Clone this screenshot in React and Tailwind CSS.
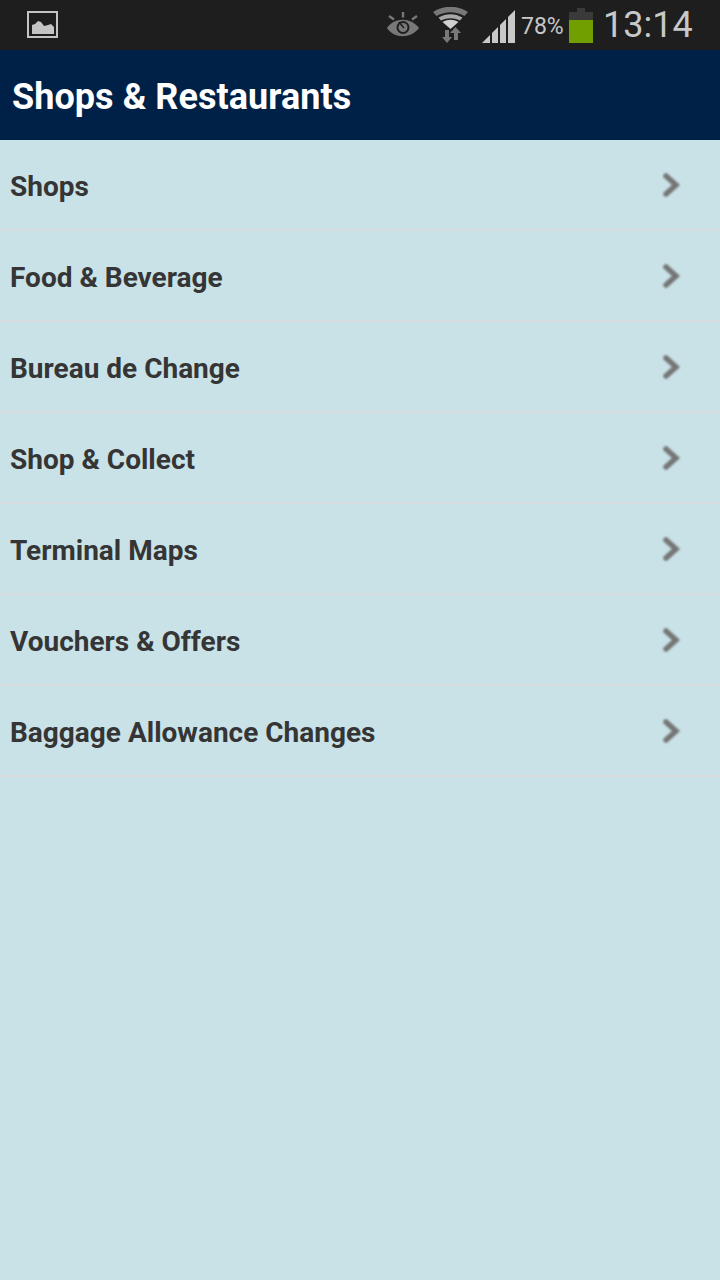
const items = [
  'Shops',
  'Food & Beverage',
  'Bureau de Change',
  'Shop & Collect',
  'Terminal Maps',
  'Vouchers & Offers',
  'Baggage Allowance Changes',
];

function ImageIcon() {
  return (
    <svg width="31" height="27" viewBox="0 0 31 27" className="block">
      <rect x="1" y="1" width="29" height="25" fill="none" stroke="#c4c4c4" strokeWidth="2" />
      <path d="M5 23V14L8 13L11 10L14 11L17 15L21 14L24 13L27 16V23Z" fill="#c4c4c4" />
    </svg>
  );
}

function EyeIcon() {
  return (
    <svg width="32" height="25" viewBox="0 0 32 25" className="block">
      <path d="M0 16C7 5 24 5 32 16C24 27 7 27 0 16Z" fill="#787878" />
      <circle cx="16" cy="15.500" r="6.500" fill="#1e1e1e" />
      <circle cx="16" cy="15.500" r="4.500" fill="#787878" />
      <path d="M12 10L17 16" stroke="#1e1e1e" strokeWidth="1.500" />
      <path d="M2 4L7 7.500M16 0V5.500M30 4L25 7.500" stroke="#787878" strokeWidth="2.400" />
    </svg>
  );
}

function WifiIcon() {
  return (
    <svg width="35" height="36" viewBox="0 0 35 36" className="block">
      <path d="M0 5C10 -2 25 -2 35 5L31.500 9C22 4 13 4 3.500 9Z" fill="#787878" />
      <path d="M5.500 10.500C13 6 22 6 29.500 10.500L27 13.500C20 10.500 15 10.500 8 13.500Z" fill="#a8a8a8" />
      <path d="M9.500 15C15 12 20 12 25.500 15L17.500 22Z" fill="#d0d0d0" />
      <path d="M12 23V30H9L14 36L19 30H16V23Z" fill="#787878" />
      <path d="M21 33V26H17L22.500 20L28 26H25V33Z" fill="#787878" />
    </svg>
  );
}

function SignalIcon() {
  return (
    <svg width="33" height="33" viewBox="0 0 33 33" className="block">
      <path d="M0 33L8 25V33Z" fill="#c8c8c8" />
      <path d="M10 23L16 17V33H10Z" fill="#c8c8c8" />
      <path d="M18 15L24 9V33H18Z" fill="#c8c8c8" />
      <path d="M26 7L33 0V33H26Z" fill="#c8c8c8" />
    </svg>
  );
}

function BatteryIcon() {
  return (
    <div className="flex flex-col items-center w-6">
      <div className="w-2 h-1 bg-[#3a3a3a]" />
      <div className="w-6 h-2 bg-[#3a3a3a]" />
      <div className="w-6 h-[23px] bg-[#719f00]" />
    </div>
  );
}

function Chevron() {
  return (
    <svg width="20" height="26" viewBox="0 0 20 26" className="block blur-[0.8px]">
      <path d="M4 4L14 13L4 22" fill="none" stroke="#757575" strokeWidth="5.500" strokeLinejoin="miter" strokeLinecap="round" />
    </svg>
  );
}

export default function App() {
  return (
    <div className="w-[720px] h-[1280px] bg-[#c9e2e8] flex flex-col font-['Roboto',sans-serif]">
      {/* Status bar */}
      <div className="h-[50px] bg-[#1e1e1e] flex items-start shrink-0">
        <div className="ml-[27px] mt-[11px]"><ImageIcon /></div>
        <div className="ml-auto flex items-start">
          <div className="mt-[12px]"><EyeIcon /></div>
          <div className="ml-[14px] mt-[7px]"><WifiIcon /></div>
          <div className="ml-[14px] mt-[10px]"><SignalIcon /></div>
          <span className="ml-[6px] mt-[15px] w-[43px] text-[23px] leading-none text-[#c8c8c8] whitespace-nowrap">78%</span>
          <div className="ml-[5px] mt-[8px]"><BatteryIcon /></div>
          <span className="ml-[10px] mr-[28px] mt-[7px] w-[89px] text-[36px] leading-none text-[#c8c8c8] whitespace-nowrap">13:14</span>
        </div>
      </div>

      {/* Header */}
      <div className="h-[90px] bg-[#002147] flex items-center pl-3 pt-1 shrink-0">
        <h1 className="text-[36px] font-bold text-white leading-none tracking-[0.05px]">Shops &amp; Restaurants</h1>
      </div>

      {/* Menu */}
      <div>
        {items.map((item) => (
          <div key={item} className="h-[91px] border-b-2 border-[#d8dcde] flex items-center justify-between pl-2.5 pr-[38px]">
            <span className="pt-[5px] text-[28px] font-bold text-[#353535] leading-none">{item}</span>
            <Chevron />
          </div>
        ))}
      </div>
    </div>
  );
}
